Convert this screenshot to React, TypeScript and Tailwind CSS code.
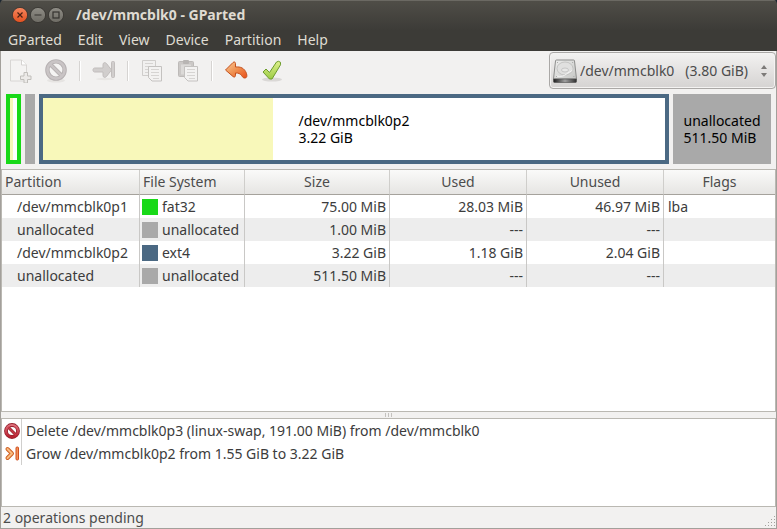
import React from "react";

const menus = ["GParted", "Edit", "View", "Device", "Partition", "Help"];

type Row = {
  partition: string;
  fs: string;
  swatch: string;
  size: string;
  used: string;
  unused: string;
  flags: string;
};

const rows: Row[] = [
  { partition: "/dev/mmcblk0p1", fs: "fat32", swatch: "bg-[#18d918]", size: "75.00 MiB", used: "28.03 MiB", unused: "46.97 MiB", flags: "lba" },
  { partition: "unallocated", fs: "unallocated", swatch: "bg-[#a9a9a9]", size: "1.00 MiB", used: "---", unused: "---", flags: "" },
  { partition: "/dev/mmcblk0p2", fs: "ext4", swatch: "bg-[#4b6983]", size: "3.22 GiB", used: "1.18 GiB", unused: "2.04 GiB", flags: "" },
  { partition: "unallocated", fs: "unallocated", swatch: "bg-[#a9a9a9]", size: "511.50 MiB", used: "---", unused: "---", flags: "" },
];

const columns = [
  { title: "Partition", align: "text-left" },
  { title: "File System", align: "text-left" },
  { title: "Size", align: "text-center" },
  { title: "Used", align: "text-center" },
  { title: "Unused", align: "text-center" },
  { title: "Flags", align: "text-center" },
];

function WindowButton({ label, kind }: { label: string; kind: "close" | "min" | "max" }) {
  return (
    <button aria-label={label} className="h-4 w-4">
      <svg viewBox="0 0 16 16" className="block h-4 w-4" fill="none">
        <defs>
          <linearGradient id={"wb-" + kind} x1="0" y1="0" x2="0" y2="1">
            <stop offset="0" stopColor={kind === "close" ? "#f6875f" : "#8f8d86"} />
            <stop offset="1" stopColor={kind === "close" ? "#e2501f" : "#6d6b64"} />
          </linearGradient>
        </defs>
        <circle cx="8" cy="8" r="7.6" fill={"url(#wb-" + kind + ")"} stroke="#33312d" strokeWidth="0.8" />
        {kind === "close" && <path d="M5.5 5.5l5 5M10.5 5.5l-5 5" stroke="#4a2013" strokeWidth="1.2" />}
        {kind === "min" && <path d="M4.5 8h7" stroke="#35332f" strokeWidth="1.2" />}
        {kind === "max" && <rect x="5" y="5" width="6" height="6" stroke="#35332f" strokeWidth="1.2" />}
      </svg>
    </button>
  );
}

function ToolButton({ label, disabled, children }: { label: string; disabled?: boolean; children: React.ReactNode }) {
  return (
    <button aria-label={label} disabled={disabled} className="flex h-9 w-9 items-center justify-center">
      <svg viewBox="0 0 24 24" className="h-6 w-6" fill="none">
        {children}
      </svg>
    </button>
  );
}

function ToolSeparator() {
  return (
    <div className="flex w-3 justify-center">
      <div className="h-5 w-0.5 border-r border-l border-r-white border-l-[#d6d4d2]" />
    </div>
  );
}

function ForbiddenIcon() {
  return (
    <svg viewBox="0 0 16 16" className="block h-4 w-4" fill="none">
      <defs>
        <linearGradient id="forbid" x1="0" y1="0" x2="0" y2="1">
          <stop offset="0" stopColor="#e0707c" />
          <stop offset="1" stopColor="#b8202f" />
        </linearGradient>
      </defs>
      <circle cx="8" cy="8" r="6" fill="#fff" stroke="#96202c" strokeWidth="3.8" />
      <path d="M4 4l8 8" stroke="#96202c" strokeWidth="3" />
      <circle cx="8" cy="8" r="6" stroke="url(#forbid)" strokeWidth="2.2" />
      <path d="M4 4l8 8" stroke="#c83a48" strokeWidth="1.6" />
    </svg>
  );
}

function GrowIcon() {
  return (
    <svg viewBox="0 0 16 16" className="block h-4 w-4" fill="none">
      <path d="M3.5 3L8 7.5 3.5 12" stroke="#cf5f22" strokeWidth="4" strokeLinecap="round" strokeLinejoin="round" />
      <path d="M3.5 3L8 7.5 3.5 12" stroke="#f9bc80" strokeWidth="2" strokeLinecap="round" strokeLinejoin="round" />
      <rect x="12" y="1" width="2.5" height="13" rx="1" fill="#f3935a" stroke="#cf5020" />
    </svg>
  );
}

function DriveIcon() {
  return (
    <svg viewBox="0 0 24 24" className="block h-6 w-6" fill="none">
      <defs>
        <linearGradient id="drive" x1="0" y1="0" x2="1" y2="1">
          <stop offset="0" stopColor="#eeeeed" />
          <stop offset="1" stopColor="#c6c7c5" />
        </linearGradient>
        <linearGradient id="drive-front" x1="0" y1="0" x2="1" y2="0">
          <stop offset="0" stopColor="#1d1d1d" />
          <stop offset="0.5" stopColor="#a0a0a0" />
          <stop offset="1" stopColor="#2e2e2e" />
        </linearGradient>
      </defs>
      <path d="M3.5 1h17a1 1 0 0 1 1 1l2 18H.5l2-18a1 1 0 0 1 1-1z" fill="url(#drive)" stroke="#8c8d8b" />
      <path d="M.5 20h23v2.500a1 1 0 0 1-1 1h-21a1 1 0 0 1-1-1z" fill="url(#drive-front)" stroke="#4b4b4b" strokeWidth="0.6" />
      <ellipse cx="12" cy="9.5" rx="8" ry="6.500" fill="#e0e0df" stroke="#bcbdbb" strokeWidth="0.8" />
      <ellipse cx="12" cy="11" rx="3.5" ry="2" fill="#e8e8e7" stroke="#bdbdbc" strokeWidth="0.8" />
      <path d="M3.500 17c4 1 8 0 10-2s4-2 6-4" stroke="#f4f4f4" />
      <path d="M4 3.500h.8M19.300 3.500h.8M3 17.500h.8M20.500 17.500h.8" stroke="#9c9d9b" />
    </svg>
  );
}

function TitleBar() {
  return (
    <header className="rounded-t bg-linear-to-b from-[#504e48] to-[#3c3b37] to-60% text-[#dfdbd2]">
      <div className="flex h-7 items-center border-t border-[#6b6963] pl-3">
        <div className="flex gap-0.5">
          <WindowButton label="Close" kind="close" />
          <WindowButton label="Minimize" kind="min" />
          <WindowButton label="Maximize" kind="max" />
        </div>
        <h1 className="pl-3 text-sm font-bold">/dev/mmcblk0 - GParted</h1>
      </div>
      <nav className="flex h-[23px] items-center">
        {menus.map((m) => (
          <button key={m} className="px-2 text-sm">
            {m}
          </button>
        ))}
      </nav>
    </header>
  );
}

function Toolbar() {
  return (
    <div className="flex items-center justify-between pl-px">
      <div className="flex items-center">
        <ToolButton label="New" disabled>
          <path d="M2.500 1h11l5 5v16h-16z" fill="#f4f3f2" stroke="#d8d6d4" />
          <path d="M13.500 1v5h5" fill="#fff" stroke="#d5d3d1" />
          <path d="M16 13.500h3.500V17H23v3.500h-3.500V24H16v-3.500h-3.500V17H16z" fill="#eceae8" stroke="#c0beba" />
        </ToolButton>
        <ToolButton label="Delete" disabled>
          <ellipse cx="12" cy="21.500" rx="9" ry="2" fill="#e6e4e2" />
          <circle cx="12" cy="11" r="8.600" fill="#f5f4f3" stroke="#b5b0b1" strokeWidth="4.400" />
          <path d="M6 5l12 12" stroke="#b5b0b1" strokeWidth="4" />
          <circle cx="12" cy="11" r="8.600" stroke="#c9c4c5" strokeWidth="2.600" />
          <path d="M6 5l12 12" stroke="#c9c4c5" strokeWidth="2.400" />
        </ToolButton>
        <ToolSeparator />
        <ToolButton label="Resize/Move" disabled>
          <ellipse cx="13" cy="20" rx="9" ry="1.200" fill="#e8e6e4" />
          <path d="M2.500 9h8.500V5.500c0-2 2-2.500 3.500-1l5 6.500-5 6.500c-1.500 1.500-3.500 1-3.500-1V13H2.500c-2 0-2-4 0-4z" fill="#d1cecd" stroke="#c1bdbc" />
          <rect x="19.500" y="2.500" width="3" height="16" rx="1" fill="#d1cecd" stroke="#c1bdbc" />
        </ToolButton>
        <ToolSeparator />
        <ToolButton label="Copy" disabled>
          <path d="M2.500 1.500h13v15h-13z" fill="#f1f0ef" stroke="#cfcdcb" />
          <path d="M5 4.500h8M5 7.500h7M5 10.500h3M5 13.500h3" stroke="#d6d4d2" />
          <path d="M8.500 7.500h13v14.500H12L8.500 18.500z" fill="#f3f2f1" stroke="#c4c2c0" />
          <path d="M11 10.500h8M11 13.500h8M11 16.500h8M13 19.500h6" stroke="#d6d4d2" />
        </ToolButton>
        <ToolButton label="Paste" disabled>
          <rect x="2.500" y="2.500" width="15" height="15" rx="1" fill="#cbc8c6" stroke="#bdbab8" />
          <path d="M5 5.500h10v10H5z" fill="#dcdad8" />
          <rect x="7" y="1" width="6" height="4" rx="1" fill="#b8b5b3" />
          <path d="M8.500 7.500h13v14.500H12L8.500 18.500z" fill="#f3f2f1" stroke="#c4c2c0" />
          <path d="M11 10.500h8M11 13.500h8M11 16.500h8M13 19.500h6" stroke="#d6d4d2" />
        </ToolButton>
        <ToolSeparator />
        <ToolButton label="Undo">
          <defs>
            <linearGradient id="undo" x1="0" y1="0" x2="1" y2="1">
              <stop offset="0" stopColor="#f9c896" />
              <stop offset="0.5" stopColor="#ef9050" />
              <stop offset="1" stopColor="#ea4f1a" />
            </linearGradient>
          </defs>
          <path d="M1.500 11l7.500-7.500c1.200-1 2.500-.5 2.500 1V8c5-.5 9 1 11 6.500.8 2.500.3 4.500-1.500 4.500-1.500 0-2.200-.5-3.500-2.500-1.500-2-3-2.500-6-2.500v2.500c0 1.500-1.300 2-2.500 1z" fill="url(#undo)" stroke="#c4511d" strokeLinejoin="round" />
        </ToolButton>
        <ToolButton label="Apply">
          <defs>
            <linearGradient id="apply" x1="0" y1="0" x2="0" y2="1">
              <stop offset="0" stopColor="#dff08c" />
              <stop offset="1" stopColor="#9ccc45" />
            </linearGradient>
          </defs>
          <ellipse cx="12" cy="20.500" rx="10" ry="2" fill="#dad8d6" />
          <path d="M3 13l3-3 3.500 3.500L16.500 3l2-.7 2 1v2.500L12 20H9.500z" fill="url(#apply)" stroke="#6d9c2c" strokeLinejoin="round" />
        </ToolButton>
      </div>
      <div className="relative w-[227px]">
        <div className="pointer-events-none absolute inset-y-0 left-1 flex items-center">
          <DriveIcon />
        </div>
        <select
          aria-label="Device"
          className="h-[37px] w-full appearance-none rounded border border-[#aaa8a6] bg-linear-to-b from-[#f3f2f1] to-[#d5d3d2] pl-[30px] text-sm text-[#4c4c4c] shadow-[inset_0_0_0_1px_#f4f3f2]"
        >
          <option>{"/dev/mmcblk0\u00a0\u00a0\u00a0(3.80 GiB)"}</option>
        </select>
        <div className="pointer-events-none absolute inset-y-0 right-2 flex items-center">
          <svg viewBox="0 0 8 14" className="h-3.5 w-2" fill="#7c7a78">
            <path d="M4 1l3 4H1zM4 13l3-4H1z" />
          </svg>
        </div>
      </div>
    </div>
  );
}

function BarLabel({ name, size }: { name: string; size: string }) {
  return (
    <div className="relative">
      <div className="h-[17px]">{name}</div>
      <div className="h-[17px]">{size}</div>
    </div>
  );
}

function DiskMap() {
  return (
    <div className="flex gap-1 p-[5px] text-sm leading-[17px] text-black">
      <div className="flex h-[70px] w-[15px] border-4 border-[#18d918] bg-white">
        <div className="w-[3px] bg-[#f8f8ba]" />
      </div>
      <div className="h-[70px] w-2.5 bg-[#a9a9a9]" />
      <div className="relative flex h-[70px] flex-1 items-center justify-center border-4 border-[#4b6983] bg-white">
        <div className="absolute inset-y-0 left-0 w-[37%] bg-[#f8f8ba]" />
        <BarLabel name="/dev/mmcblk0p2" size="3.22 GiB" />
      </div>
      <div className="flex h-[70px] w-[98px] items-center justify-center bg-[#a9a9a9]">
        <BarLabel name="unallocated" size="511.50 MiB" />
      </div>
    </div>
  );
}

function PartitionTable() {
  const cell = "border-r border-[#c9c8c6] p-0 last:border-r-0";
  return (
    <div className="flex-1 border border-[#bab8b2] bg-white">
      <table className="w-full table-fixed border-separate border-spacing-0 text-sm">
        <colgroup>
          <col className="w-[138px]" />
          <col className="w-[105px]" />
          <col className="w-[145px]" />
          <col className="w-[137px]" />
          <col className="w-[137px]" />
          <col />
        </colgroup>
        <thead>
          <tr className="h-[25px]">
            {columns.map((c) => (
              <th
                key={c.title}
                className={"border-r border-b border-r-[#cfcecb] border-b-[#a5a29c] bg-linear-to-b from-[#fafaf9] to-[#e6e5e3] px-[3px] py-0 font-normal text-[#4c4c4c] last:border-r-0 " + c.align}
              >
                {c.title}
              </th>
            ))}
          </tr>
        </thead>
        <tbody className="text-[#3c3c3c]">
          {rows.map((r, i) => (
            <tr key={i} className="h-[23px] even:bg-[#ededed]">
              <td className={cell}>
                <span className="pl-[15px]">{r.partition}</span>
              </td>
              <td className={cell}>
                <div className="flex items-center gap-1 pl-0.5">
                  <span className={"h-4 w-4 " + r.swatch} />
                  {r.fs}
                </div>
              </td>
              <td className={cell + " text-right"}>
                <span className="pr-[3px]">{r.size}</span>
              </td>
              <td className={cell + " text-right"}>
                <span className="pr-[3px]">{r.used}</span>
              </td>
              <td className={cell + " text-right"}>
                <span className="pr-[3px]">{r.unused}</span>
              </td>
              <td className={cell}>
                <span className="pl-1">{r.flags}</span>
              </td>
            </tr>
          ))}
        </tbody>
      </table>
    </div>
  );
}

function Operations() {
  const ops = [
    { icon: <ForbiddenIcon />, text: "Delete /dev/mmcblk0p3 (linux-swap, 191.00 MiB) from /dev/mmcblk0" },
    { icon: <GrowIcon />, text: "Grow /dev/mmcblk0p2 from 1.55 GiB to 3.22 GiB" },
  ];
  return (
    <ul className="h-[89px] border border-[#bab8b2] bg-white text-sm text-[#3c3c3c]">
      {ops.map((o) => (
        <li key={o.text} className="flex h-[23px] items-center">
          <span className="flex h-full w-5 items-center border-r border-[#d0cfcd] pl-0.5">{o.icon}</span>
          <span className="pl-1">{o.text}</span>
        </li>
      ))}
    </ul>
  );
}

function StatusBar() {
  return (
    <footer className="flex h-[21px] items-center justify-between pl-0.5 text-sm text-[#4c4c4c]">
      <span>2 operations pending</span>
      <svg viewBox="0 0 12 12" className="h-3 w-3 self-end" fill="#a3a19d">
        <path d="M10 0h1v1h-1zM7 3h1v1H7zM10 3h1v1h-1zM4 6h1v1H4zM7 6h1v1H7zM10 6h1v1h-1zM1 9h1v1H1zM4 9h1v1H4zM7 9h1v1H7zM10 9h1v1h-1z" />
      </svg>
    </footer>
  );
}

export default function App() {
  return (
    <div className="h-screen bg-[#1c2630] font-['Noto_Sans',sans-serif]">
      <main className="flex h-full flex-col overflow-hidden rounded-t">
        <TitleBar />
        <div className="flex min-h-0 flex-1 flex-col border-x border-b border-[#a3a09b] bg-[#f2f1f0]">
          <div className="pt-px">
            <Toolbar />
          </div>
          <DiskMap />
          <PartitionTable />
          <div className="flex h-1.5 items-center justify-center gap-0.5">
            <span className="h-1 w-px bg-[#c4c2bf]" />
            <span className="h-1 w-px bg-[#c4c2bf]" />
            <span className="h-1 w-px bg-[#c4c2bf]" />
          </div>
          <Operations />
          <StatusBar />
        </div>
      </main>
    </div>
  );
}
